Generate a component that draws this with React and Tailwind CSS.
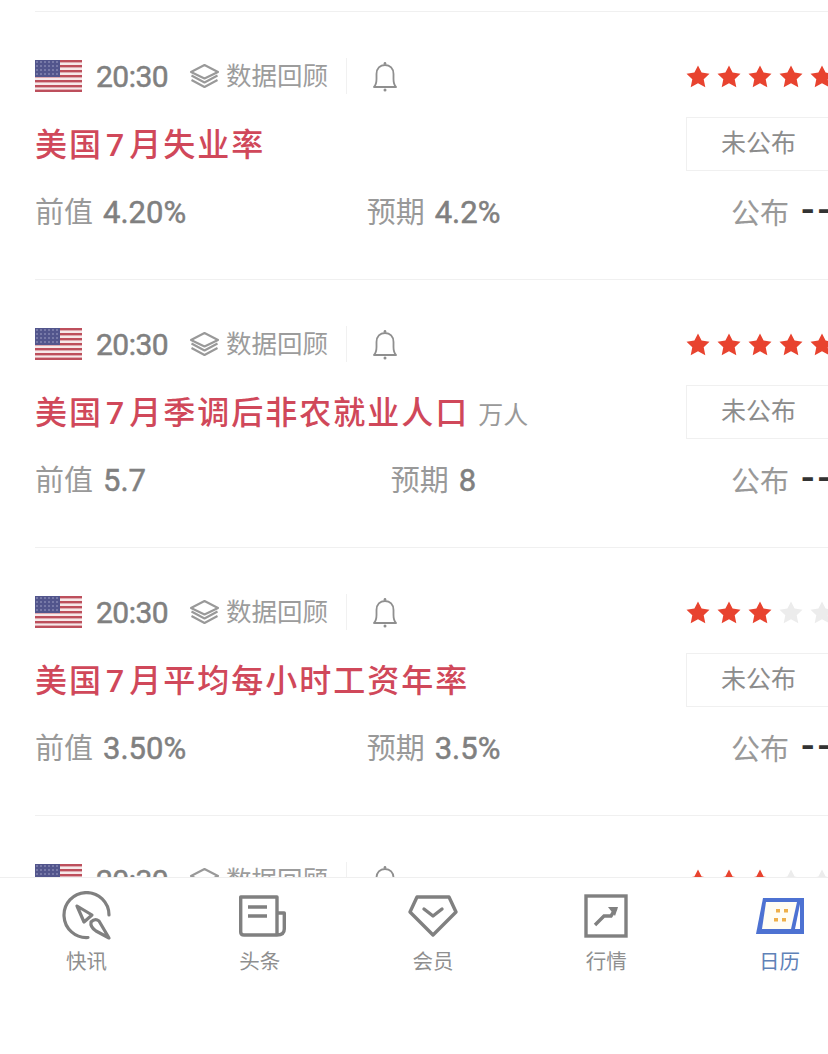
import React from 'react';

const rows = [
  { title: '失业率', unit: '', prev: '4.20%', expect: '4.2%', stars: 5 },
  { title: '季调后非农就业人口', unit: '万人', prev: '5.7', expect: '8', stars: 5 },
  { title: '平均每小时工资年率', unit: '', prev: '3.50%', expect: '3.5%', stars: 3 },
  // only the top of this row shows above the tab bar
  { headerOnly: true, stars: 3 },
];

const FlagIcon = () => (
  <svg width="47" height="32" viewBox="0 0 47 32" className="shrink-0">
    <rect width="47" height="32" fill="#f6e9ea" />
    {[0, 5, 10, 15, 20, 25, 29.6].map((y) => (
      <rect key={y} x="0" y={y} width="47" height="2.4" fill="#bd4f5c" />
    ))}
    <rect width="25" height="17" fill="#52558c" />
    {[3, 7, 11, 15].map((y) =>
      [3, 7, 11, 15, 19, 23].map((x) => (
        <circle key={`${x}-${y}`} cx={x - 1} cy={y - 1} r="0.8" fill="#a6a9cb" />
      ))
    )}
  </svg>
);

const LayersIcon = () => (
  <svg width="31" height="26" viewBox="0 0 31 26" fill="none" stroke="#999" strokeWidth="2.1" strokeLinejoin="round" className="shrink-0">
    <path d="M15.5 2 L29 9 L15.5 15.5 L2 9 Z" />
    <path d="M2.5 12.5 L15.5 19.5 L28.5 12.5" />
    <path d="M2.5 17 L15.5 24 L28.5 17" />
  </svg>
);

const BellIcon = () => (
  <svg width="26" height="31" viewBox="0 0 26 31" fill="none" stroke="#8f8f8f" strokeWidth="1.8" className="shrink-0">
    <path d="M2 26 C4 24 4.5 22 4.5 18 V13 C4.5 7.5 8 4 13 4 C18 4 21.5 7.5 21.5 13 V18 C21.5 22 22 24 24 26 Z" strokeLinejoin="round" />
    <circle cx="13" cy="2.2" r="1.3" fill="#8f8f8f" stroke="none" />
    <circle cx="13" cy="29" r="1.5" fill="#8f8f8f" stroke="none" />
  </svg>
);

const StarIcon = ({ on }) => (
  <svg width="24" height="23" viewBox="0 0 24 23" className="shrink-0">
    <polygon
      points="12,0.5 15.6,7.6 23.5,8.8 17.7,14.3 19.3,22.3 12,18.3 4.7,22.3 6.3,14.3 0.5,8.8 8.4,7.6"
      fill={on ? '#e8432f' : '#ececec'}
    />
  </svg>
);

const Metric = ({ label, value, dark }) => (
  <span className="whitespace-nowrap">
    <span className="text-[29px] text-[#999]">{label}</span>
    {dark ? (
      <span className="ml-[12px] text-[40px] leading-none font-medium tracking-[3px] text-[#333]">{value}</span>
    ) : (
      <span className="ml-[10px] font-['Roboto',sans-serif] text-[31px] font-normal text-[#808080] [-webkit-text-stroke:0.5px_#808080]">{value}</span>
    )}
  </span>
);

const Row = ({ row }) => (
  <div className="h-[268px] shrink-0 pt-[48px] pl-[35px]">
    <div className="flex h-[34px] w-[815px] items-center">
      <FlagIcon />
      <span className="ml-[14px] w-[71px] font-['Roboto',sans-serif] text-[30px] font-normal tracking-[-0.5px] whitespace-nowrap text-[#808080] [-webkit-text-stroke:0.5px_#808080]">20:30</span>
      <span className="ml-[22px]"><LayersIcon /></span>
      <span className="ml-[6px] text-[25.5px] text-[#9c9c9c]">数据回顾</span>
      <span className="ml-[18px] h-[36px] w-px bg-[#f1f1f1]" />
      <span className="ml-[25px]"><BellIcon /></span>
      <div className="ml-auto flex w-[164px] gap-[7px]">
        {[1, 2, 3, 4, 5].map((n) => <StarIcon key={n} on={n <= row.stars} />)}
      </div>
    </div>
    {!row.headerOnly && (
      <>
        <div className="mt-[24px] flex h-[54px] w-[815px] items-center justify-between">
          <div className="flex items-baseline pt-[1px]">
            <span className="text-[32px] font-medium tracking-[2px] text-[#d0485a]">
              美国<span className="px-[3px]">7</span>月{row.title}
            </span>
            {row.unit && <span className="ml-[9px] text-[25px] text-[#999]">{row.unit}</span>}
          </div>
          <div className="flex h-[54px] w-[164px] items-center border border-[#f0f0f0] pl-[34px] text-[25px] text-[#8c8c8c]">
            未公布
          </div>
        </div>
        <div className="mt-[19px] grid h-[40px] w-[815px] grid-cols-[265px_267px_1fr] items-center">
          <Metric label="前值" value={row.prev} />
          <div className="text-center"><Metric label="预期" value={row.expect} /></div>
          <div className="pl-[164px]"><Metric label="公布" value="--" dark /></div>
        </div>
      </>
    )}
  </div>
);

const tabs = [
  {
    label: '快讯',
    icon: (
      <svg width="50" height="50" viewBox="0 0 50 50" fill="none" stroke="#808080" strokeWidth="3.2" strokeLinejoin="round" strokeLinecap="round">
        <path d="M47 24 A22.5 22.5 0 1 0 26 46.5" />
        <path d="M15 15 L30 24 L22 31 Z" />
        <path d="M29 31 Q33 27 37 30 L47 47 L34 40 Q28 36 29 31 Z" />
      </svg>
    ),
  },
  {
    label: '头条',
    icon: (
      <svg width="54" height="44" viewBox="0 0 54 44" fill="none" stroke="#808080" strokeWidth="3.4" strokeLinejoin="round">
        <path d="M44 41 H11 Q7.7 41 7.7 38 V3 H44 V41 Q51.3 41 51.3 35 V19 H44" />
        <path d="M15 13 H34 M15 22 H34" />
      </svg>
    ),
  },
  {
    label: '会员',
    icon: (
      <svg width="50" height="42" viewBox="0 0 50 42" fill="none" stroke="#808080" strokeWidth="3.4" strokeLinejoin="round" strokeLinecap="round">
        <path d="M9 2 H41 L48 17 L25 40 L2 17 Z" />
        <path d="M16 14 L25 21 L34 14" />
      </svg>
    ),
  },
  {
    label: '行情',
    icon: (
      <svg width="44" height="44" viewBox="0 0 44 44" fill="none" stroke="#808080" strokeWidth="3.4">
        <rect x="2" y="2" width="40" height="40" />
        <path d="M11 31 L20 22 H27 L32 14" />
        <path d="M24 13 H34 L31 22 Z" fill="#808080" stroke="none" />
      </svg>
    ),
  },
  {
    label: '日历',
    active: true,
    icon: (
      <svg width="50" height="40" viewBox="0 0 50 40" fill="none">
        <path d="M9 2 H50 V38 H2 Z" fill="#4d72d2" />
        <path d="M12 6 H43 L37 33 H8 Z" fill="#fffdf4" />
        <path d="M46 8 V33 H41 Z" fill="#fff" />
        <rect x="22" y="13" width="4" height="3.5" fill="#eeb04a" />
        <rect x="30" y="13" width="4" height="3.5" fill="#eeb04a" />
        <rect x="20" y="22" width="4" height="3.5" fill="#eeb04a" />
        <rect x="28" y="22" width="4" height="3.5" fill="#eeb04a" />
      </svg>
    ),
  },
];

const TabBar = () => (
  <div className="h-[177px] shrink-0 border-t border-[#efefef] bg-white pt-[13px]">
    <div className="grid w-[866px] grid-cols-5">
      {tabs.map((tab) => (
        <div key={tab.label} className="flex flex-col items-center">
          <div className="flex h-[50px] items-center justify-center">{tab.icon}</div>
          <span className={`mt-[6px] text-[20.5px] leading-[30px] ${tab.active ? 'text-[#5f82b8]' : 'text-[#8f8f8f]'}`}>
            {tab.label}
          </span>
        </div>
      ))}
    </div>
  </div>
);

export default function App() {
  return (
    <div className="flex h-[1054px] w-[828px] flex-col overflow-hidden bg-white font-['Roboto','Noto_Sans_CJK_SC',sans-serif]">
      <div className="min-h-0 flex-1 overflow-hidden pt-[11px]">
        {rows.map((row, i) => (
          <React.Fragment key={i}>
            <div className="ml-[35px] h-px bg-[#f0f0f0]" />
            <div className="-mt-px"><Row row={row} /></div>
          </React.Fragment>
        ))}
      </div>
      <TabBar />
    </div>
  );
}
